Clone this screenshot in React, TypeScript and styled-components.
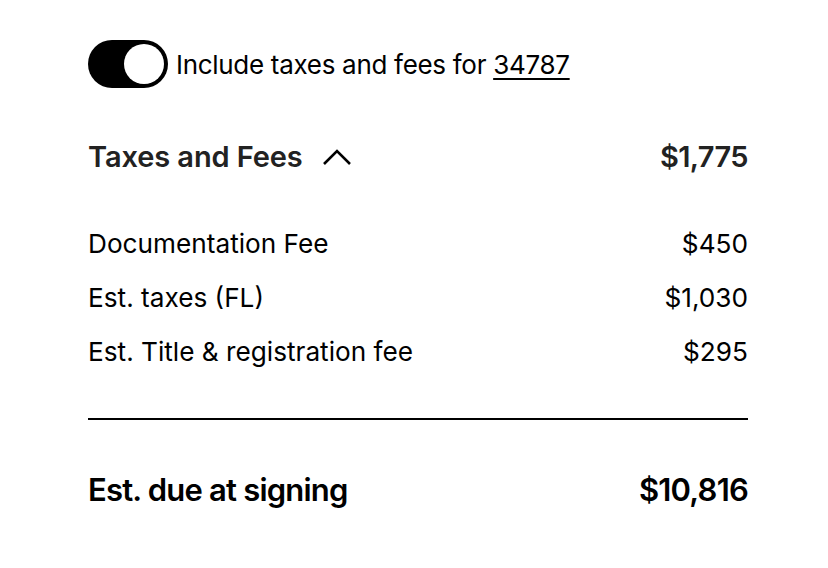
import React, {FC, useState} from 'react'
import styled, {createGlobalStyle} from 'styled-components'

const GlobalStyle = createGlobalStyle`
  body {
    margin: 0;
    background: #ffffff;
    font-family: Inter, "Noto Sans", sans-serif;
    color: #000000;
  }
`

const Page = styled.div`
  width: 660px;
  padding: 40px 80px 40px 88px;
`

const ToggleRow = styled.label`
  display: flex;
  align-items: center;
  gap: 8px;
  font-size: 26px;
  letter-spacing: -0.3px;
  cursor: pointer;
`

const Track = styled.span<{on: boolean}>`
  display: flex;
  align-items: center;
  justify-content: ${(p) => (p.on ? 'flex-end' : 'flex-start')};
  box-sizing: border-box;
  width: 80px;
  height: 48px;
  padding: 4px;
  border-radius: 24px;
  background: ${(p) => (p.on ? '#000' : '#ccc')};
`

const Knob = styled.span`
  width: 40px;
  height: 40px;
  border-radius: 50%;
  background: #fff;
`

const Zip = styled.span`
  text-decoration: underline;
  text-underline-offset: 4px;
  text-decoration-thickness: 2px;
`

const SectionHead = styled.div`
  display: flex;
  justify-content: space-between;
  align-items: center;
  margin-top: 51px;
  color: #222;
  font-size: 29px;
  font-weight: 600;
  letter-spacing: -0.1px;
`

const HeadTitle = styled.button`
  display: flex;
  align-items: center;
  gap: 19px;
  padding: 0;
  border: 0;
  background: none;
  font: inherit;
  color: inherit;
  letter-spacing: inherit;
  cursor: pointer;
`

const Amount = styled.span`
  letter-spacing: -0.6px;
`

const List = styled.ul`
  list-style: none;
  margin: 54px 0 0;
  padding: 0;
  display: flex;
  flex-direction: column;
  gap: 22px;
`

const Row = styled.li`
  display: flex;
  justify-content: space-between;
  font-size: 26.2px;
  line-height: 32px;
`

const Divider = styled.hr`
  margin: 50px 0 0;
  border: 0;
  border-top: 2px solid #000;
`

const Total = styled.div`
  display: flex;
  justify-content: space-between;
  margin-top: 51px;
  font-size: 31px;
  font-weight: 600;
  letter-spacing: -0.8px;
`

const fees = [
  {label: 'Documentation Fee', amount: '$450'},
  {label: 'Est. taxes (FL)', amount: '$1,030'},
  {label: 'Est. Title & registration fee', amount: '$295'},
]

const App: FC = () => {
  const [on, setOn] = useState(true)
  const [open, setOpen] = useState(true)
  return (
    <Page>
      <GlobalStyle />
      <ToggleRow onClick={() => setOn(!on)}>
        <Track on={on}>
          <Knob />
        </Track>
        <span>
          Include taxes and fees for <Zip>34787</Zip>
        </span>
      </ToggleRow>
      <SectionHead>
        <HeadTitle onClick={() => setOpen(!open)}>
          Taxes and Fees
          <svg width="30" height="20" viewBox="0 0 30 20" fill="none" stroke="#000" strokeWidth="2.6">
            <path d={open ? 'M2 17 L15 4 L28 17' : 'M2 4 L15 17 L28 4'} />
          </svg>
        </HeadTitle>
        <Amount>$1,775</Amount>
      </SectionHead>
      {open && (
        <List>
          {fees.map((f) => (
            <Row key={f.label}>
              <span>{f.label}</span>
              <span>{f.amount}</span>
            </Row>
          ))}
        </List>
      )}
      <Divider />
      <Total>
        <span>Est. due at signing</span>
        <span>$10,816</span>
      </Total>
    </Page>
  )
}

export default App
